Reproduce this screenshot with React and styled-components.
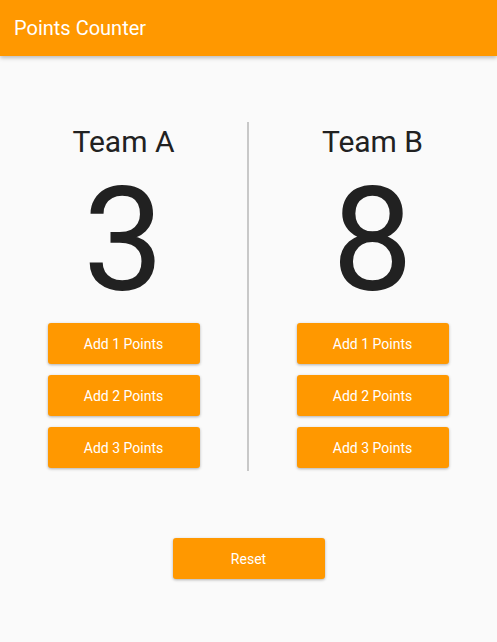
import styled, { createGlobalStyle } from "styled-components";
import { useState } from "react";

const GlobalStyle = createGlobalStyle`
    * { box-sizing: border-box; }
    html, body {
        margin: 0;
        padding: 0;
        background: #fafafa;
        font-family: "Roboto", "Liberation Sans", sans-serif;
    }
`

export default function App() {
    const [scoreA, setScoreA] = useState(3)
    const [scoreB, setScoreB] = useState(8)

    return (
        <Page>
            <GlobalStyle />
            <Toolbar>Points Counter</Toolbar>
            <Teams>
                <Team name="Team A" score={scoreA} add={(n) => setScoreA(scoreA + n)} />
                <Divider />
                <Team name="Team B" score={scoreB} add={(n) => setScoreB(scoreB + n)} />
            </Teams>
            <ResetRow>
                <Button onClick={() => { setScoreA(0); setScoreB(0) }}>Reset</Button>
            </ResetRow>
        </Page>
    )
}

function Team({ name, score, add }) {
    return (
        <Column>
            <TeamName>{name}</TeamName>
            <Score>{score}</Score>
            <Buttons>
                {[1, 2, 3].map((n) => (
                    <Button key={n} onClick={() => add(n)}>Add {n} Points</Button>
                ))}
            </Buttons>
        </Column>
    )
}

const Page = styled.div`
    min-height: 642px;
    background: #fafafa;
`

const Toolbar = styled.header`
    height: 56px;
    display: flex;
    align-items: center;
    padding-left: 14px;
    background: #ff9800;
    color: #fff;
    font-size: 20px;
    box-shadow: 0 2px 4px rgba(0, 0, 0, 0.25);
`

const Teams = styled.div`
    display: flex;
    margin-top: 66px;
    padding-right: 1px;
`

const Column = styled.div`
    flex: 1;
    display: flex;
    flex-direction: column;
    align-items: center;
    padding-top: 2px;
    padding-bottom: 3px;
`

const Divider = styled.div`
    width: 2px;
    background: #c8c8c8;
`

const TeamName = styled.div`
    font-size: 30px;
    line-height: 36px;
    color: #212121;
`

const Score = styled.div`
    margin-top: 1px;
    font-size: 144px;
    line-height: 160px;
    color: #212121;
`

const Buttons = styled.div`
    display: flex;
    flex-direction: column;
    gap: 11px;
    margin-top: 2px;
`

const Button = styled.button`
    width: 152px;
    height: 41px;
    border: none;
    border-radius: 3px;
    background: #ff9800;
    color: #fff;
    font-family: "Roboto", "Liberation Sans", sans-serif;
    font-size: 14px;
    font-weight: 400;
    box-shadow: 0 1px 3px rgba(0, 0, 0, 0.3);
    cursor: pointer;
`

const ResetRow = styled.div`
    display: flex;
    justify-content: center;
    margin-top: 67px;
`
